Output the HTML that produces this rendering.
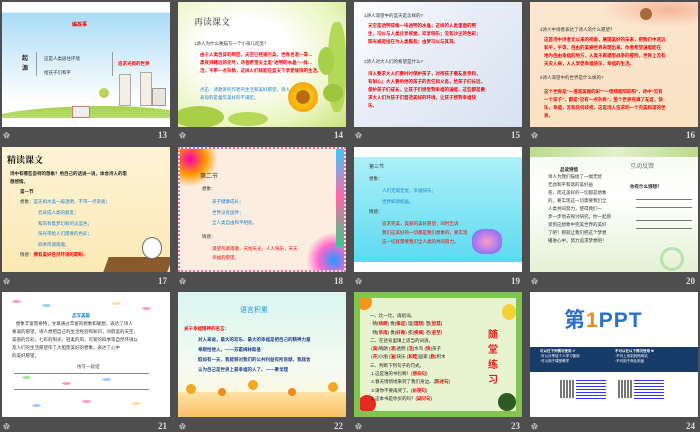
<!DOCTYPE html>
<html><head><meta charset="utf-8"><style>
*{margin:0;padding:0;box-sizing:border-box}
body{width:700px;height:431px;background:#4e4e4e;position:relative;overflow:hidden;font-family:"Liberation Sans","Noto Sans CJK SC",sans-serif}
.s{position:absolute;width:168px;height:125px;overflow:hidden;background:#fff}
.n{position:absolute;color:#ddd;font:bold 9px "Liberation Serif",serif}
.ic{position:absolute;color:#bbb;font-size:7px}
.t{position:absolute;font-size:4.5px;line-height:7px;white-space:nowrap}
.r{color:#e00;font-weight:bold}.b{color:#1a7fd0}.k{color:#222;font-weight:bold}
.f{position:absolute;width:9px;height:3px;border-radius:50%}
</style></head><body>

<!-- 13 -->
<div class="s" style="left:2px;top:2px;background:linear-gradient(#fff 0,#fff 8%,#a9dcf6 9%,#e8f5fc 60%,#fff 80%)">
<div class="t r" style="left:70px;top:20px;font-size:5px">编故事</div>
<div class="t k" style="left:20px;top:52px;font-size:6px;line-height:10px">起<br>源</div>
<div style="position:absolute;left:34px;top:50px;width:3px;height:24px;border-left:1px solid #999;border-radius:3px"></div>
<div class="t" style="left:42px;top:53px;color:#333">这是人类居住环境</div>
<div class="t" style="left:42px;top:67px;color:#333">给孩子们和平</div>
<div style="position:absolute;left:108px;top:50px;width:3px;height:24px;border-right:1px solid #999"></div>
<div class="t r" style="left:116px;top:58px">追求光亮的世界</div>
<div style="position:absolute;left:-20px;top:104px;width:210px;height:30px;background:linear-gradient(#a6d24a,#d7ecb0);border-radius:70% 50% 0 0"></div>
<div style="position:absolute;left:0;top:116px;width:168px;height:9px;background:#fff"></div>
<div style="position:absolute;left:117px;top:72px;width:12px;height:32px;background:#f3efe5;border:1px solid #aaa"></div>
<div style="position:absolute;left:138px;top:70px;width:12px;height:34px;background:#f3efe5;border:1px solid #aaa"></div>
<div style="position:absolute;left:150px;top:86px;width:14px;height:18px;background:#e8e3dd;border:1px solid #999"></div>
<div style="position:absolute;left:70px;top:104px;width:18px;height:12px;background:#eee;border:1px solid #c77"></div>
<div style="position:absolute;left:97px;top:86px;width:10px;height:10px;border-radius:50%;background:#b9d659"></div>
</div>
<div class="ic" style="left:3px;top:131px">✿</div><div class="n" style="left:158px;top:130px">13</div>

<!-- 14 -->
<div class="s" style="left:178px;top:2px;background:radial-gradient(ellipse at 40% 40%,#fff 30%,#eaf5c0 70%,#c8e47a 100%)">
<div class="t" style="left:16px;top:14px;font-size:9px;line-height:12px;color:#333;font-family:'Noto Serif CJK SC',serif">再读课文</div>
<div class="t" style="left:16px;top:38px;color:#333">1诗人为什么要描写一个小孩儿吃坚？</div>
<div class="t r" style="left:22px;top:49px;line-height:8px">由于人类自身的原因，天空已经被污染，世界也混一等…<br>黑夜目睹远的无尽，诗者希望天全是"透明的水晶"一样…<br>洁，不带一点杂质，这样人们就能在蓝天下享受愉快的生活。</div>
<div class="t b" style="left:22px;top:84px;line-height:8px">点击：诗歌寄托作者的生活和美好愿望，诗人<br>表现的是童年美好的不满足。</div>
<div style="position:absolute;left:110px;top:80px;width:30px;height:30px;border-radius:50%;background:radial-gradient(#b86b12 30%,#f7c21c 35%,#f9a70a 70%,transparent 72%)"></div>
<div style="position:absolute;left:-4px;top:104px;width:50px;height:22px;border-radius:50%;background:#a9cf46"></div>
<div style="position:absolute;left:50px;top:110px;width:40px;height:14px;border-radius:50%;background:#b6d95a"></div>
<div style="position:absolute;left:150px;top:20px;width:18px;height:90px;border-radius:40%;background:#b4d857"></div>
<div style="position:absolute;left:140px;top:45px;width:16px;height:28px;border-radius:50%;background:#a8cf4a"></div>
<div style="position:absolute;left:145px;top:82px;width:20px;height:18px;border-radius:50%;background:#9cc63e"></div>
</div>
<div class="ic" style="left:179px;top:131px">✿</div><div class="n" style="left:334px;top:130px">14</div>

<!-- 15 -->
<div class="s" style="left:354px;top:2px;background:linear-gradient(135deg,#fff 0%,#e8eef8 40%,#d8e2f0 100%)">
<div class="t" style="left:10px;top:10px;color:#333">1诗人渴望中的蓝天是怎样的?</div>
<div class="t r" style="left:14px;top:20px;line-height:8px">天空是透明得像一块透明的水晶；这样的人类里面的照<br>生，可以与人类分享视觉，欢享快乐；没有沙尘的色彩；<br>阳光被遮挡在为人类服务；由梦可以与其洞。</div>
<div class="t" style="left:10px;top:56px;color:#333">2诗人对大人们的希望是什么?</div>
<div class="t r" style="left:14px;top:68px;line-height:8px">诗人要求大人们要时时保护孩子，对待孩子要友善亲和，<br>有耐心；大人要用他的孩子的责任和义务，给孩子们长远，<br>保护孩子们成长，让孩子们感受到幸福的温暖。这些都是要<br>求大人们为孩子们营造美好的环境，让孩子感到幸福快<br>乐。</div>
</div>
<div class="ic" style="left:355px;top:131px">✿</div><div class="n" style="left:511px;top:130px">15</div>

<!-- 16 -->
<div class="s" style="left:530px;top:2px;background:linear-gradient(#fbe6d0,#fae1c2);">
<div style="position:absolute;left:70px;top:0;width:98px;height:25px;background:radial-gradient(ellipse at 70% 30%,#f6b59a,transparent 70%)"></div>
<div style="position:absolute;left:110px;top:6px;width:12px;height:12px;border-radius:50%;background:#a76b3b"></div>
<div class="t" style="left:10px;top:24px;color:#333">4诗④中诗者表达了诗人的什么愿望？</div>
<div class="t r" style="left:14px;top:34px;line-height:8px">这首诗中诗者无以来的视角，展现美好的未来，把我们中遥远<br>和平，平等，自由的美丽世界表现出来。作者希望温暖能在<br>地为自由幸福的地方，人类不再遭受战争的摧残，世界上没有<br>天灾人祸，人人享受幸福快乐，幸福的生活。</div>
<div class="t" style="left:10px;top:72px;color:#333">5诗人渴望中的世界是什么样的?</div>
<div class="t r" style="left:14px;top:86px;line-height:8px">这个世界是"一道道美丽的彩""一缕缕暖阳的阳"，诗中"没有<br>一个孩子"，都是"没有一点杂质"，整个世界充满了友谊，快<br>乐，幸福，没有任何歧视，这是诗人追求的一个完美和谐的世<br>界。</div>
</div>
<div class="ic" style="left:531px;top:131px">✿</div><div class="n" style="left:686px;top:130px">16</div>

<!-- 17 -->
<div class="s" style="left:2px;top:147px;background:linear-gradient(#fdf4d6,#fbe9b4)">
<div class="t" style="left:5px;top:7px;font-size:9px;line-height:12px;color:#111;font-weight:bold;font-family:'Noto Serif CJK SC',serif">精读课文</div>
<div class="t k" style="left:8px;top:23px;line-height:8px">诗中有哪些奇特的想象？用自己的话说一说，体会诗人的思<br>想感情。</div>
<div class="t k" style="left:18px;top:41px">第一节</div>
<div class="t" style="left:18px;top:51px;color:#333">想象：<span class="b">蓝天如水晶一般透明，不带一点杂质；</span></div>
<div class="t b" style="left:36px;top:61px;line-height:10.5px">云朵成人类的朋友；<br>和风有着梦幻般的淡蓝色；<br>阳光带给人们需要的色彩；<br>四季风调雨顺。</div>
<div class="t" style="left:18px;top:104px;color:#333">情感：<span class="r">拥有美好自然环境的期盼。</span></div>
<div style="position:absolute;left:104px;top:110px;width:64px;height:15px;background:#8a5a2b;transform:skewX(-20deg)"></div>
<div style="position:absolute;left:140px;top:90px;width:20px;height:22px;border-radius:50%;background:#fff;border:1px solid #666"></div>
</div>
<div class="ic" style="left:3px;top:277px">✿</div><div class="n" style="left:158px;top:276px">17</div>

<!-- 18 -->
<div class="s" style="left:178px;top:147px;background:#fbeee0;border:2px dotted #e36cb0">
<div style="position:absolute;left:-2px;top:-2px;width:40px;height:40px;background:radial-gradient(circle at 30% 30%,#f0a,#f90 40%,transparent 70%)"></div>
<div style="position:absolute;right:-2px;bottom:-2px;width:40px;height:40px;background:radial-gradient(circle at 70% 70%,#29f,#f6c 40%,transparent 70%)"></div>
<div style="position:absolute;right:-2px;top:-2px;width:10px;height:100px;background:linear-gradient(#3cf,#f6a,#3c8)"></div>
<div class="t" style="left:20px;top:25px;color:#333;font-size:6px">第二节</div>
<div class="t" style="left:22px;top:36px;color:#333">想象：</div>
<div class="t b" style="left:32px;top:48px;line-height:10.5px">孩子健康成长；<br>世界没有国界；<br>全人类自由和平相处。</div>
<div class="t" style="left:22px;top:84px;color:#333">情感：</div>
<div class="t r" style="left:32px;top:95px;line-height:9px;font-weight:normal">渴望风调雨顺，天佑天光，人人快乐，天天<br>幸福的愿望。</div>
</div>
<div class="ic" style="left:179px;top:277px">✿</div><div class="n" style="left:334px;top:276px">18</div>

<!-- 19 -->
<div class="s" style="left:354px;top:147px;background:#fff">
<div style="position:absolute;left:0;top:10px;width:168px;height:105px;background:linear-gradient(#aef0f8,#5cdaf0)"></div>
<div class="t" style="left:15px;top:17px;color:#333;font-size:5px">第三节</div>
<div class="t" style="left:15px;top:28px;color:#333">想象：</div>
<div class="t b" style="left:28px;top:39px;line-height:10.5px">人们无病无忧，幸福快乐；<br>世界如诗如画。</div>
<div class="t" style="left:15px;top:61px;color:#333">情感：</div>
<div class="t r" style="left:28px;top:72px;line-height:9px;font-weight:normal">追求完美，美丽的美好愿望；同时告诉<br>我们这美好的一切都是我们想象的，要实现<br>这一切就需要我们全人类的共同努力。</div>
<div style="position:absolute;left:118px;top:82px;width:30px;height:25px;border-radius:40%;background:radial-gradient(#f9c,#66f)"></div>
</div>
<div class="ic" style="left:355px;top:277px">✿</div><div class="n" style="left:511px;top:276px">19</div>

<!-- 20 -->
<div class="s" style="left:530px;top:147px;background:linear-gradient(#f6faf0,#fff 40%,#e4f1d4)">
<div style="position:absolute;left:0;top:0;width:168px;height:10px;background:linear-gradient(90deg,#b9db8a,#e3f0cc,#b9db8a)"></div>
<div class="t k" style="left:30px;top:19px">品读感悟</div>
<div class="t" style="left:18px;top:26px;color:#333;line-height:8px">诗人为我们描绘了一幅无忧<br>无虑和平和谐的美好画<br>卷，而这美好的一切都是想象<br>的，要实现这一切需要我们全<br>人类共同努力，使得我们一<br>步一步地去探讨研究，你一起感<br>受到这想象中完美世界的美好<br>了吧！那就让我们把这个梦想<br>播进心中，努力追求梦想吧！</div>
<div class="t" style="left:100px;top:15px;color:#444;font-size:6px;font-family:'Noto Serif CJK SC',serif">互动反馈</div>
<div class="t k" style="left:100px;top:36px">你有什么感想？</div>
<div style="position:absolute;left:106px;top:52px;width:56px;height:30px;border-top:1px solid #777;border-bottom:1px solid #777"></div>
<div style="position:absolute;left:106px;top:60px;width:56px;height:14px;border-top:1px solid #777;border-bottom:1px solid #777"></div>
<div style="position:absolute;left:130px;top:100px;width:24px;height:24px;border-radius:50%;border:3px solid #b8e2b0"></div>
</div>
<div class="ic" style="left:531px;top:277px">✿</div><div class="n" style="left:686px;top:276px">20</div>

<!-- 21 -->
<div class="s" style="left:2px;top:292px;background:#fff">
<div class="f" style="left:10px;top:8px;background:#f9c"></div><div class="f" style="left:40px;top:12px;background:#9cf"></div><div class="f" style="left:110px;top:10px;background:#fd9"></div><div class="f" style="left:140px;top:15px;background:#f9c"></div>
<div class="f" style="left:20px;top:84px;background:#9e9"></div><div class="f" style="left:60px;top:90px;background:#f9c"></div><div class="f" style="left:100px;top:86px;background:#9cf"></div><div class="f" style="left:130px;top:110px;background:#fd9"></div><div class="f" style="left:30px;top:112px;background:#9cf"></div><div class="f" style="left:80px;top:108px;background:#f9c"></div>
<div class="t b" style="left:70px;top:20px;font-weight:bold">品写美篇</div>
<div class="t" style="left:10px;top:28px;color:#333;line-height:8px">&nbsp;&nbsp;&nbsp;想象丰富而奇特，文章通过丰富的想象和联想，表达了诗人<br>真诚的愿望，诗人想把自己的生活经验和知识，对蔚蓝的天空，<br>美丽的云彩，七彩的阳光，轻柔的风，可爱的四季等自然环境以<br>及人们的生活愿望作了大胆而美好的想象，表达了心中<br>的美好愿望。</div>
<div class="t" style="left:75px;top:71px;color:#333">仿写一段话</div>
<div style="position:absolute;left:12px;top:81px;width:135px;height:1px;background:#888"></div>
<div style="position:absolute;left:12px;top:97px;width:135px;height:1px;background:#888"></div>
</div>
<div class="ic" style="left:3px;top:422px">✿</div><div class="n" style="left:158px;top:421px">21</div>

<!-- 22 -->
<div class="s" style="left:178px;top:292px;background:linear-gradient(#d9f5f0,#f5fbf0 60%,#fff3d8)">
<div class="t" style="left:62px;top:14px;color:#1a9ad8;font-size:7px;line-height:9px">语言积累</div>
<div class="t r" style="left:6px;top:33px">关于幸福精神的名言：</div>
<div class="t" style="left:20px;top:43px;color:#1a3e8a;font-weight:bold;line-height:10px">对人来说，最大的欢乐、最大的幸福是把自己的精神力量<br>奉献给他人。——苏霍姆林斯基<br>假如有一天，我能够对我们的公共利益有所贡献，我就会<br>认为自己是世界上最幸福的人了。——果戈理</div>
<div style="position:absolute;left:0;top:100px;width:168px;height:25px;background:linear-gradient(#fde3a4,#f9c066)"></div>
<div style="position:absolute;left:8px;top:92px;width:10px;height:10px;border-radius:50%;background:#f5a623"></div>
<div style="position:absolute;left:40px;top:96px;width:8px;height:8px;border-radius:50%;background:#f08a18"></div>
<div style="position:absolute;left:70px;top:88px;width:10px;height:10px;border-radius:50%;background:#f5a623"></div>
<div style="position:absolute;left:110px;top:96px;width:8px;height:8px;border-radius:50%;background:#f08a18"></div>
<div style="position:absolute;left:150px;top:90px;width:10px;height:10px;border-radius:50%;background:#f5a623"></div>
</div>
<div class="ic" style="left:179px;top:422px">✿</div><div class="n" style="left:334px;top:421px">22</div>

<!-- 23 -->
<div class="s" style="left:354px;top:292px;background:#e8f3d0;border:6px solid #7fc550">
<div style="position:absolute;left:-4px;top:-4px;width:16px;height:16px;border-radius:50%;background:#f7941d"></div>
<div style="position:absolute;right:0;top:6px;width:14px;height:16px;border-radius:50%;background:#f4d233"></div>
<div style="position:absolute;left:-2px;bottom:-2px;width:18px;height:18px;border-radius:50%;background:#e52a1f"></div>
<div style="position:absolute;right:0;bottom:0;width:18px;height:18px;border-radius:50%;background:#2c5b22"></div>
<div class="t" style="left:10px;top:14px;color:#222;line-height:8.3px">一、比一比，再组词。<br>&nbsp;&nbsp;晴(<span class="r">晴朗</span>) 像(<span class="r">像是</span>) 理(<span class="r">理想</span>) 慧(<span class="r">智慧</span>)<br>&nbsp;&nbsp;晴(<span class="r">吊雨</span>) 像(<span class="r">好像</span>) 疾(<span class="r">疾病</span>) 甚(<span class="r">甚至</span>)<br>二、在括号里填上适当的词语。<br>&nbsp;(<span class="r">滴</span>)晴朗 (<span class="r">清</span>)透明 (<span class="r">活</span>)水鸟 (<span class="r">快</span>)孩子<br>&nbsp;(<span class="r">开</span>)小朋 (<span class="r">温</span>)快乐 (<span class="r">和睦</span>)国家 (<span class="r">勤</span>)积木<br>三、判断下列句子的句式。<br>&nbsp;1.这是谁的书包啊！(<span class="r">感叹句</span>)<br>&nbsp;2.春天悄悄地来到了我们身边。(<span class="r">陈述句</span>)<br>&nbsp;3.请你不要再哭了。(<span class="r">祈使句</span>)<br>&nbsp;4.这本书是你买的吗？(<span class="r">疑问句</span>)</div>
<div class="t r" style="left:128px;top:30px;font-size:10px;line-height:15px;color:#e02020">随<br>堂<br>练<br>习</div>
</div>
<div class="ic" style="left:355px;top:422px">✿</div><div class="n" style="left:511px;top:421px">23</div>

<!-- 24 -->
<div class="s" style="left:530px;top:292px;background:#fff">
<div class="t" style="left:34px;top:17px;font-size:21px;line-height:24px;color:#2a6fc9;font-weight:bold;letter-spacing:1px">第<span style="color:#f08a18">1</span>PPT</div>
<div style="position:absolute;left:0;top:55px;width:168px;height:25px;background:#183c6a"></div>
<div class="t" style="left:10px;top:57px;color:#fff;font-size:3.5px;line-height:5px"><b>可以在下列情况使用 ✔</b><br>·可以分享给个人学习使用<br>·可以用于课堂教学</div>
<div class="t" style="left:85px;top:57px;color:#fff;font-size:3.5px;line-height:5px"><b>不可以在以下情况使用 ✖</b><br>·不可上传到其他网站<br>·不可用于商业用途</div>
<div style="position:absolute;left:30px;top:88px;width:14px;height:18px;background:repeating-linear-gradient(90deg,#777 0 2px,#fff 2px 3px)"></div>
<div style="position:absolute;left:46px;top:88px;width:30px;height:20px;background:repeating-linear-gradient(#33f 0 1px,transparent 1px 3px)"></div>
<div style="position:absolute;left:88px;top:88px;width:14px;height:18px;background:repeating-linear-gradient(90deg,#777 0 2px,#fff 2px 3px)"></div>
<div style="position:absolute;left:104px;top:88px;width:30px;height:20px;background:repeating-linear-gradient(#33f 0 1px,transparent 1px 3px)"></div>
</div>
<div class="ic" style="left:531px;top:422px">✿</div><div class="n" style="left:686px;top:421px">24</div>

</body></html>
